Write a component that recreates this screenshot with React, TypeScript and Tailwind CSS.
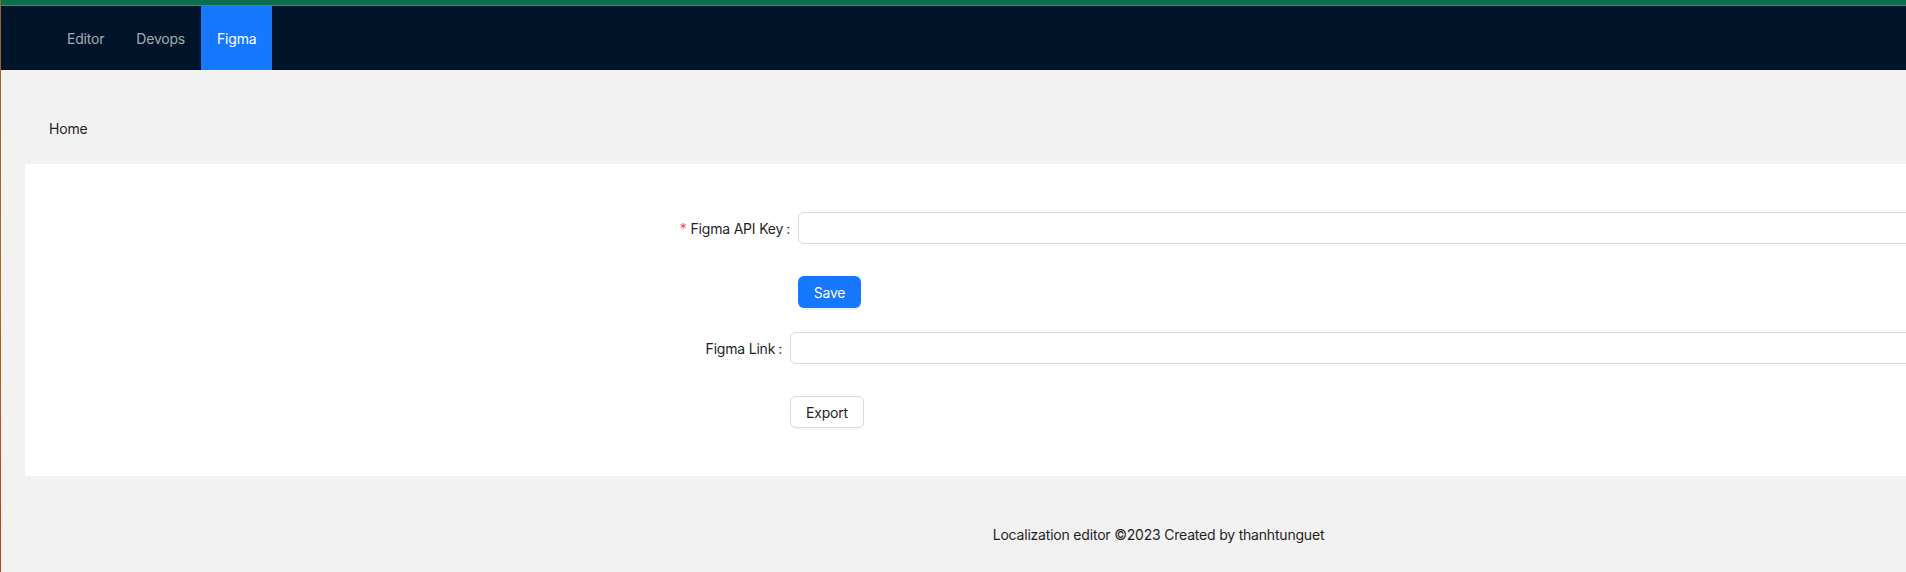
import React from "react";

export default function App() {
  const font = { fontFamily: 'Inter, "Noto Sans", "Liberation Sans", sans-serif' };
  return (
    <div className="w-[1906px] h-[572px] overflow-hidden bg-[#f2f2f2] tracking-[-0.2px]" style={font}>
      <div className="flex w-[2316px] h-[572px]">
        <div className="w-[1px] h-full bg-gradient-to-b from-[#9a6428] via-[#b8661a] to-[#c23d0c] shrink-0" />
        <div className="flex-1 flex flex-col">
          <div className="h-[5px] bg-[#0a6f4f]" />
          <div className="h-[1px] bg-[#3f8f75]" />
          <nav className="h-[64px] bg-[#001529] flex items-stretch pl-[50px] text-[14px]">
            <div className="px-[16px] flex items-center text-[rgba(255,255,255,0.65)]">Editor</div>
            <div className="px-[16px] flex items-center text-[rgba(255,255,255,0.65)]">Devops</div>
            <div className="px-[16px] flex items-center bg-[#1677ff] text-white">Figma</div>
          </nav>
          <div className="px-[24px]">
            <div className="pt-[48px] pb-[24px] pl-[24px] text-[14px] leading-[22px] text-[#1f1f1f]">Home</div>
            <div className="bg-white pt-[48px] pb-[48px] h-[312px]">
              <div className="flex items-center h-[32px]">
                <div className="w-[773px] shrink-0 text-right pr-[8px] text-[14px] text-[#1f1f1f]">
                  <span className="text-[#ff4d4f] mr-[4px]">*</span>Figma API Key<span className="ml-[3px]">:</span>
                </div>
                <div className="flex-1 h-[32px] border border-[#d9d9d9] rounded-[6px] bg-white" />
              </div>
              <div className="mt-[32px] ml-[773px]">
                <button className="h-[32px] w-[63px] rounded-[6px] bg-[#1677ff] text-white text-[14px] shadow-[0_2px_0_rgba(5,145,255,0.1)]">
                  Save
                </button>
              </div>
              <div className="mt-[24px] flex items-center h-[32px]">
                <div className="w-[765px] shrink-0 text-right pr-[8px] text-[14px] text-[#1f1f1f]">
                  Figma Link<span className="ml-[3px]">:</span>
                </div>
                <div className="flex-1 h-[32px] border border-[#d9d9d9] rounded-[6px] bg-white" />
              </div>
              <div className="mt-[32px] ml-[765px]">
                <button className="h-[32px] w-[74px] rounded-[6px] bg-white border border-[#d9d9d9] text-[#1f1f1f] text-[14px] shadow-[0_2px_0_rgba(0,0,0,0.02)]">
                  Export
                </button>
              </div>
            </div>
          </div>
          <footer className="pt-[48px] text-center text-[14px] leading-[22px] text-[#1f1f1f]">
            Localization editor ©2023 Created by thanhtunguet
          </footer>
        </div>
      </div>
    </div>
  );
}
